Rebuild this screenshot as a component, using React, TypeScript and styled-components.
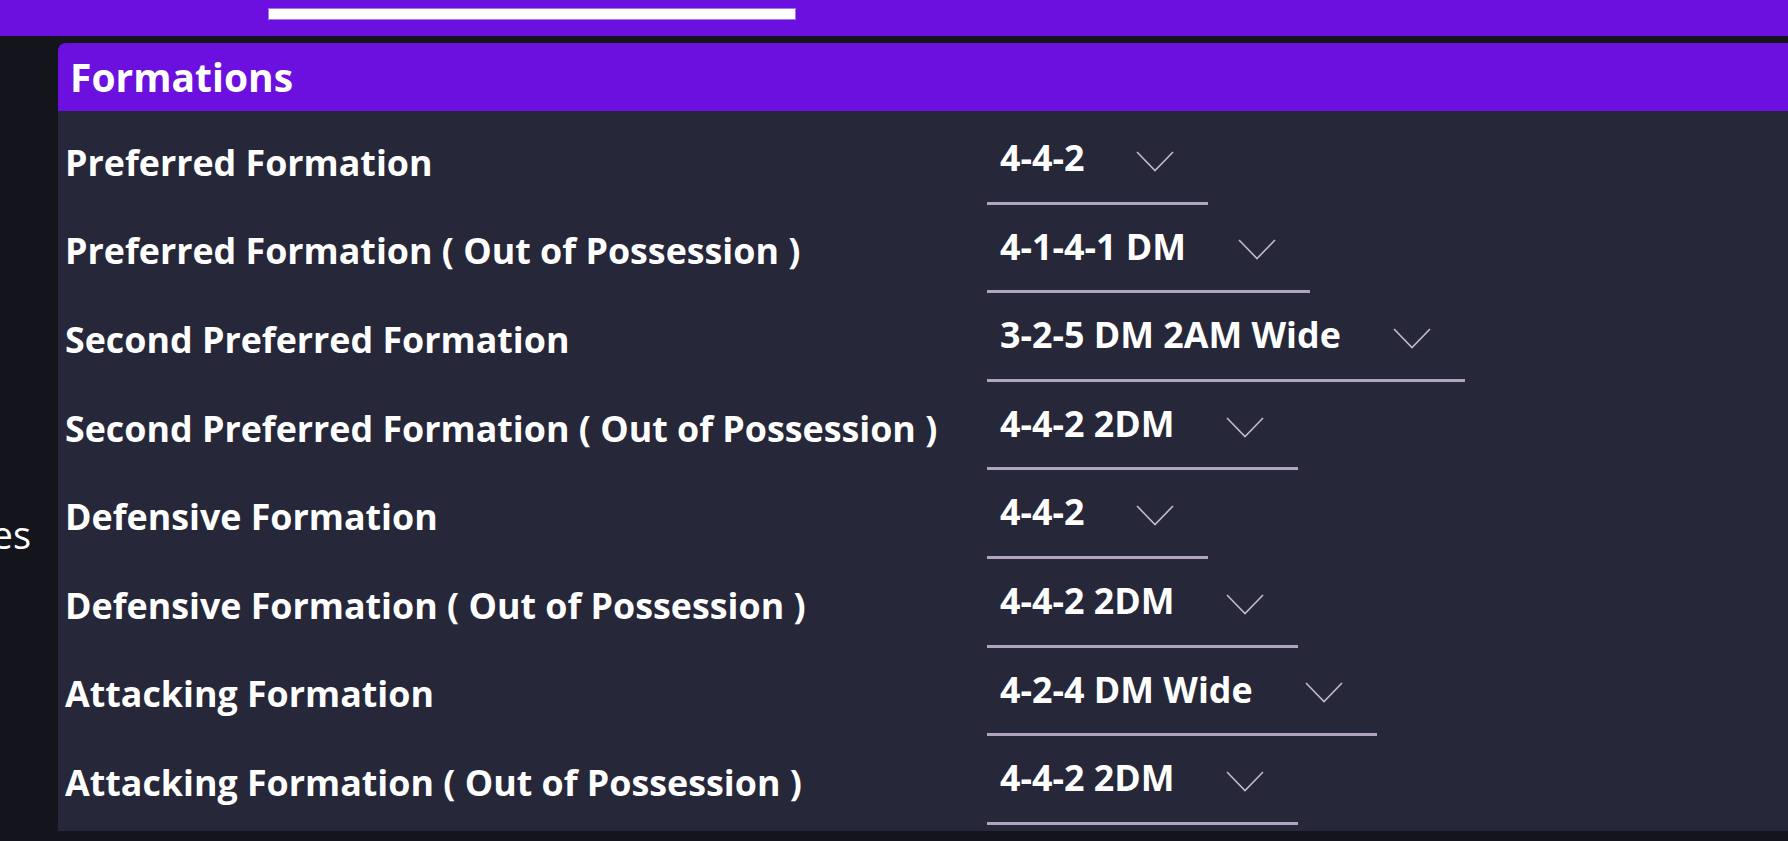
import React from 'react';
import styled, { createGlobalStyle } from 'styled-components';

const GlobalStyle = createGlobalStyle`
  html, body {
    margin: 0;
    padding: 0;
    background: #14151c;
    font-family: "Open Sans", "Noto Sans", sans-serif;
    color: #ffffff;
  }
  #root {
    height: 100vh;
  }
`

const Page = styled.div`
  display: flex;
  flex-direction: column;
  height: 100vh;
  overflow: hidden;
`

const TopBar = styled.div`
  flex: none;
  height: 36px;
  box-sizing: border-box;
  padding: 8px 0 0 268px;
  background: #6b10de;
`

const SearchStrip = styled.div`
  width: 528px;
  height: 12px;
  box-sizing: border-box;
  background: #ffffff;
  border: 1px solid #a274f0;
`

const Body = styled.div`
  flex: 1;
  min-height: 0;
  display: flex;
  padding: 7px 0 10px 0;
`

const Sidebar = styled.div`
  flex: none;
  width: 58px;
  box-sizing: border-box;
  overflow: hidden;
  display: flex;
  justify-content: flex-end;
  align-items: flex-start;
  padding: 465px 27px 0 0;
`

const SideItem = styled.span`
  white-space: nowrap;
  font-size: 38px;
  font-weight: 400;
  color: #ffffff;
`

const Panel = styled.section`
  flex: 1;
  display: flex;
  flex-direction: column;
  background: #262739;
  border-top-left-radius: 8px;
  overflow: hidden;
`

const PanelHeader = styled.h2`
  margin: 0;
  flex: none;
  height: 68px;
  box-sizing: border-box;
  display: flex;
  align-items: center;
  padding: 0 0 2px 12px;
  background: #6b10de;
  font-size: 39px;
  font-weight: 700;
`

const Rows = styled.div`
  display: flex;
  flex-direction: column;
  padding: 5px 0 6px 7px;
`

const Row = styled.div`
  display: flex;
  align-items: center;
`

const Label = styled.div`
  flex: none;
  width: 922px;
  font-size: 35.8px;
  font-weight: 700;
  white-space: nowrap;
  padding-top: 3px;
`

const Select = styled.div`
  display: flex;
  align-items: center;
  padding: 17px 34px 19px 13px;
  border-bottom: 3px solid #b1a4c0;
  cursor: pointer;
`

const Value = styled.span`
  font-size: 35.8px;
  font-weight: 700;
  line-height: 49.6px;
  white-space: nowrap;
`

const Chevron = styled.svg`
  flex: none;
  margin-left: 52px;
  margin-top: 7px;
`

const formations = [
    { label: 'Preferred Formation', value: '4-4-2' },
    { label: 'Preferred Formation ( Out of Possession )', value: '4-1-4-1 DM' },
    { label: 'Second Preferred Formation', value: '3-2-5 DM 2AM Wide' },
    { label: 'Second Preferred Formation ( Out of Possession )', value: '4-4-2 2DM' },
    { label: 'Defensive Formation', value: '4-4-2' },
    { label: 'Defensive Formation ( Out of Possession )', value: '4-4-2 2DM' },
    { label: 'Attacking Formation', value: '4-2-4 DM Wide' },
    { label: 'Attacking Formation ( Out of Possession )', value: '4-4-2 2DM' },
]

export default function App() {
    return (
        <Page>
            <GlobalStyle />
            <TopBar>
                <SearchStrip />
            </TopBar>
            <Body>
                <Sidebar>
                    <SideItem>Preferences</SideItem>
                </Sidebar>
                <Panel>
                    <PanelHeader>Formations</PanelHeader>
                    <Rows>
                        {formations.map((f) => (
                            <Row key={f.label}>
                                <Label>{f.label}</Label>
                                <Select>
                                    <Value>{f.value}</Value>
                                    <Chevron width="38" height="21" viewBox="0 0 38 21">
                                        <path d="M1 1 L19 19.5 L37 1" fill="none" stroke="#c3b8cf" strokeWidth="1.6" />
                                    </Chevron>
                                </Select>
                            </Row>
                        ))}
                    </Rows>
                </Panel>
            </Body>
        </Page>
    )
}
